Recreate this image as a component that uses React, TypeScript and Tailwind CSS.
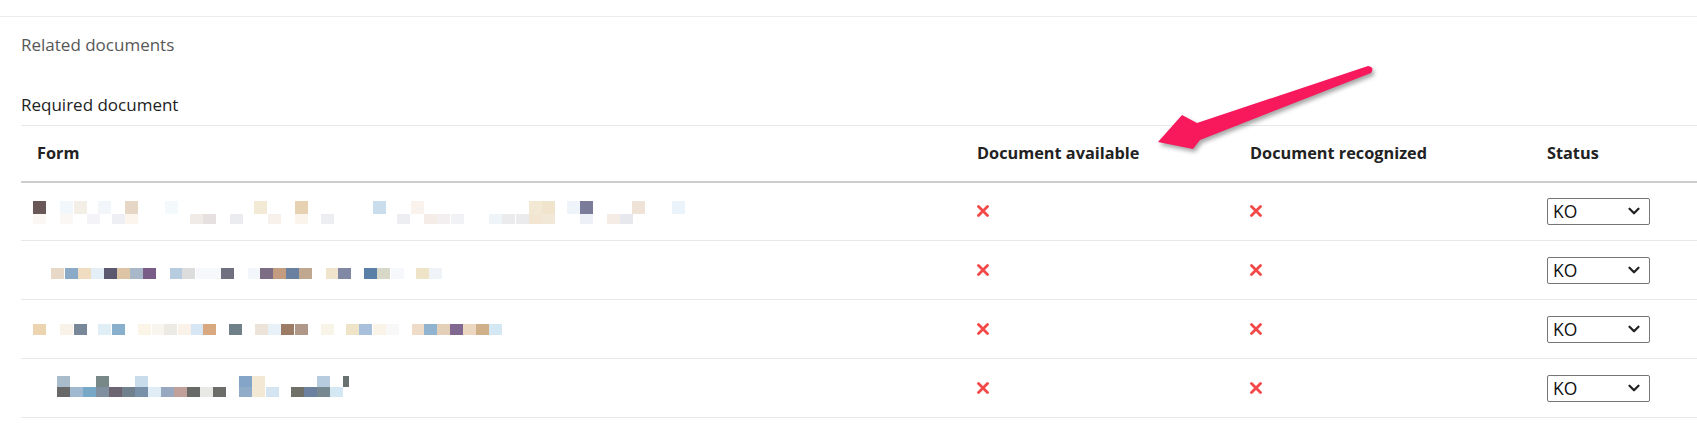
import { ChevronDown } from 'lucide-react'

type Block = [number, number, number, number, string]

// pixelated (blurred) form names, x in page px minus 33
const T = 3
const B = 16
const ROW1: Block[] = [
  [0, T, 13, 13, '#6a5858'], [27, T, 13, 13, '#f2f7fb'], [41, T, 13, 13, '#f3eee6'], [65, T, 13, 13, '#f2f5f9'],
  [92, T, 13, 13, '#e6d6c6'], [132, T, 13, 13, '#f4fafc'], [221, T, 13, 13, '#f2ead4'], [262, T, 13, 13, '#e6d2b2'],
  [340, T, 13, 13, '#c9dded'], [378, T, 13, 13, '#faf2ec'], [496, T, 13, 13, '#f2e8d4'], [509, T, 13, 13, '#f0e4cc'],
  [534, T, 13, 13, '#eef4fa'], [547, T, 13, 13, '#7a7c9a'], [599, T, 13, 13, '#efe2d6'], [639, T, 13, 13, '#eaf4fa'],
  [0, B, 13, 10, '#faf7f4'], [27, B, 13, 10, '#fbf7f4'], [54, B, 13, 10, '#f4f4f8'], [79, B, 13, 10, '#eeeff4'],
  [92, B, 13, 10, '#fbf5ee'], [157, B, 13, 10, '#f1ebe8'], [170, B, 13, 10, '#e6e0e0'], [197, B, 13, 10, '#ebecf0'],
  [235, B, 13, 10, '#f8f0ea'], [262, B, 13, 10, '#faf4ec'], [288, B, 13, 10, '#edeef2'], [364, B, 13, 10, '#eceef2'],
  [391, B, 13, 10, '#f5ece8'], [404, B, 13, 10, '#f3eef0'], [418, B, 13, 10, '#f0f2f6'], [456, B, 13, 10, '#eff4f8'],
  [469, B, 13, 10, '#ebebee'], [483, B, 13, 10, '#ebebee'], [496, B, 13, 10, '#f2e6d2'], [509, B, 13, 10, '#f2e8d8'],
  [547, B, 13, 10, '#edf0f6'], [574, B, 13, 10, '#f5ece6'], [587, B, 13, 10, '#e6e8ee'],
]

const row2Colors: [number, string][] = [
  [51, '#e8d8c8'], [65, '#8aaac8'], [78, '#f0dcc0'], [91, '#e4eef6'], [104, '#5c5870'], [117, '#dcc4a4'],
  [130, '#a8b8c8'], [143, '#7a5c88'], [170, '#b8cce0'], [182, '#dcdcdc'], [196, '#f6f8fb'], [208, '#f6f8fb'],
  [221, '#707080'], [248, '#f3f6fa'], [260, '#7c6c84'], [273, '#c49c80'], [286, '#6a80a0'], [299, '#c0a890'],
  [326, '#f0e4cc'], [338, '#8088a4'], [364, '#5a80a8'], [377, '#d8d8c8'], [391, '#f6f8fb'], [416, '#f0e4c8'],
  [429, '#f0f4f8'],
]
const ROW2: Block[] = row2Colors.map(([x, c]) => [x - 33, 11, 13, 11, c])

const row3Colors: [number, string][] = [
  [33, '#ecd4b0'], [60, '#f8f2e8'], [74, '#788898'], [98, '#e0eef6'], [112, '#88b0cc'], [138, '#fbf5e8'],
  [152, '#f8f4ee'], [164, '#eceae4'], [178, '#faf2e8'], [191, '#d6e6f4'], [203, '#d8a880'], [229, '#708088'],
  [255, '#ece4d8'], [268, '#e8f0f8'], [281, '#9c7c64'], [295, '#b09888'], [321, '#f8f4e8'], [346, '#f0e4c8'],
  [359, '#a8c0dc'], [373, '#faf4e8'], [386, '#f8f8f8'], [412, '#eedcc8'], [424, '#90b4d0'], [437, '#e4d0b8'],
  [450, '#806890'], [463, '#ecd8c0'], [476, '#d0b088'], [489, '#d4e8f4'],
]
const ROW3: Block[] = row3Colors.map(([x, c]) => [x - 33, 8, 13, 11, c])

const row4Top: [number, string][] = [
  [57, '#a8bccc'], [96, '#788888'], [135, '#c8dcec'], [239, '#84a4c8'], [252, '#f2e8d4'], [317, '#b8cce0'],
]
const row4Bottom: [number, string][] = [
  [57, '#686868'], [70, '#a0b8d0'], [83, '#78a8c8'], [96, '#8090a0'], [109, '#6c6470'], [122, '#70808c'],
  [135, '#7890a8'], [148, '#e0ecf6'], [161, '#98a8c0'], [174, '#c0a098'], [187, '#686a68'], [200, '#e8e8e4'],
  [213, '#6c6c68'], [239, '#90acc8'], [252, '#f2e8d4'], [266, '#d4e4f0'], [291, '#707068'], [304, '#6c80a0'],
  [317, '#788890'], [330, '#d4e8f4'],
]
const ROW4: Block[] = [
  ...row4Top.map(([x, c]): Block => [x - 33, 1, 13, 11, c]),
  [343 - 33, 1, 6, 11, '#687070'],
  ...row4Bottom.map(([x, c]): Block => [x - 33, 12, 13, 10, c]),
]

const ROWS = [ROW1, ROW2, ROW3, ROW4]

function Mosaic({ blocks }: { blocks: Block[] }) {
  return (
    <svg width="680" height="26" viewBox="0 0 680 26" className="block" shapeRendering="crispEdges">
      {blocks.map(([x, y, w, h, c], i) => (
        <rect key={i} x={x} y={y} width={w} height={h} fill={c} />
      ))}
    </svg>
  )
}

function Cross() {
  return (
    <svg width="12" height="12" viewBox="0 0 12 12" className="block">
      <path d="M1.5 1.5 L10.5 10.5 M10.5 1.5 L1.5 10.5" stroke="#f24848" strokeWidth="2.8" strokeLinecap="round" />
    </svg>
  )
}

function StatusSelect() {
  return (
    <div className="flex h-[27px] w-[103px] items-center justify-between rounded-[2px] border border-[#767676] bg-white pl-[5px] pr-[6px] text-[17.5px] text-[#111]">
      <span>KO</span>
      <ChevronDown size={18} strokeWidth={3} className="text-[#222]" />
    </div>
  )
}

export default function App() {
  return (
    <div className="relative h-[423px] w-full overflow-hidden bg-white font-['Open_Sans',sans-serif]">
      <div className="mt-4 border-t border-[#ececec] pl-[21px] pt-4">
        <p className="text-[17px] leading-6 text-[#575757]">Related documents</p>
        <p className="mt-9 text-[17px] leading-6 text-[#222]">Required document</p>

        <table className="mt-2 w-[1676px] table-fixed border-collapse">
          <colgroup>
            <col className="w-[940px]" />
            <col className="w-[273px]" />
            <col className="w-[297px]" />
            <col />
          </colgroup>
          <thead>
            <tr className="h-[56px] border-t border-b-2 border-t-[#e8e8e8] border-b-[#cdcdcd] text-left text-[16.3px] font-bold text-[#222]">
              <th className="pl-4 font-bold">Form</th>
              <th className="pl-4 font-bold">Document available</th>
              <th className="pl-4 font-bold">Document recognized</th>
              <th className="pl-4 font-bold">Status</th>
            </tr>
          </thead>
          <tbody>
            {ROWS.map((blocks, i) => (
              <tr key={i} className="h-[59px] border-b border-[#e8e8e8]">
                <td className="pl-3 align-middle">
                  <Mosaic blocks={blocks} />
                </td>
                <td className="pl-4 align-middle">
                  <Cross />
                </td>
                <td className="pl-4 align-middle">
                  <Cross />
                </td>
                <td className="pl-4 align-middle">
                  <StatusSelect />
                </td>
              </tr>
            ))}
          </tbody>
        </table>
      </div>

      {/* annotation arrow */}
      <svg
        className="absolute left-[1140px] top-[55px]"
        width="250"
        height="110"
        viewBox="0 0 250 110"
        style={{ filter: 'drop-shadow(2px 3px 2px rgba(0,0,0,0.35))' }}
      >
        <path d="M228 11 Q235 12 231 18 L60 85 L53 94 L18 87 L42 60 L57 68 Z" fill="#f7195c" />
      </svg>
    </div>
  )
}
